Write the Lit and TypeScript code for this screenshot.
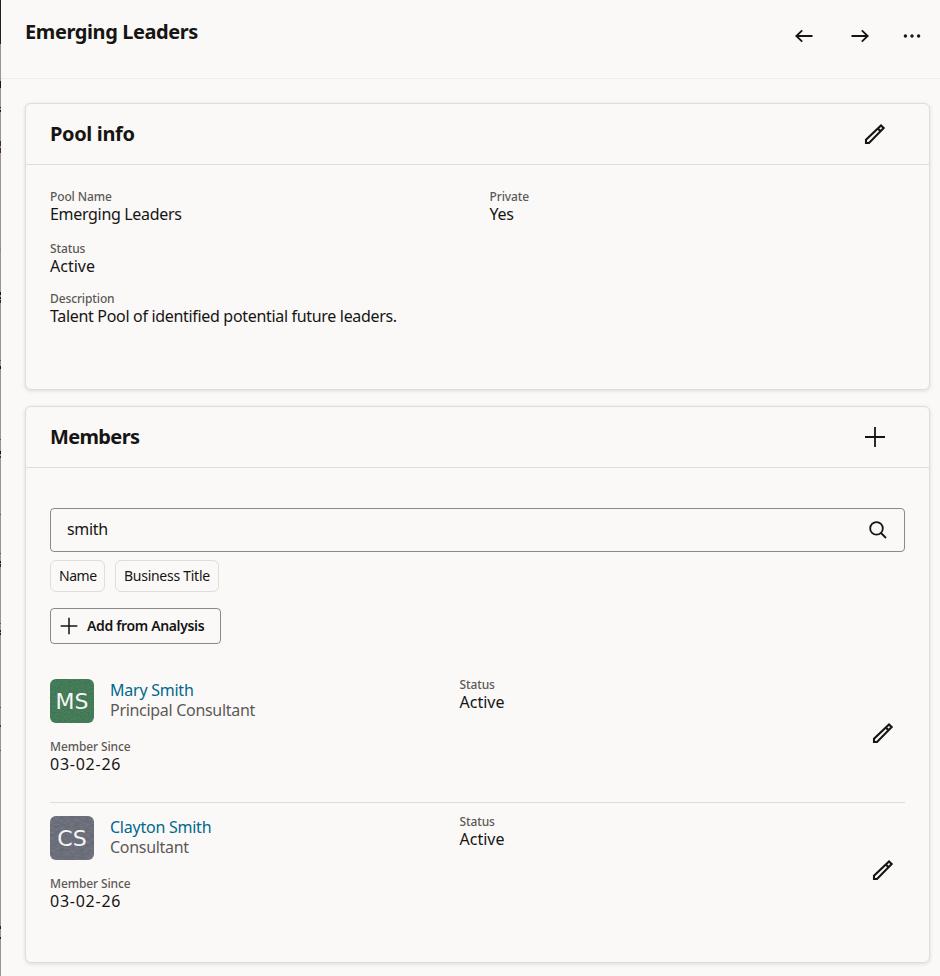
import { LitElement, html, css, svg } from "lit";
import { customElement, property } from "lit/decorators.js";

const icons: Record<string, unknown> = {
  back: svg`<path d="M20.5 12H4.3M10.2 6.3L4.3 12l5.9 5.7"/>`,
  forward: svg`<path d="M3.5 12h16.2M13.8 6.3l5.9 5.7-5.9 5.7"/>`,
  more: svg`<g fill="currentColor" stroke="none"><circle cx="5.4" cy="12" r="1.7"/><circle cx="12" cy="12" r="1.7"/><circle cx="18.6" cy="12" r="1.7"/></g>`,
  edit: svg`<path stroke-width="2.1" d="M3 21v-3.3L18 3.4l2.7 2.7L6 21z M14.8 6.4l2.9 2.9"/>`,
  plus: svg`<path d="M2 12h20M12 2v20"/>`,
  search: svg`<circle cx="10.5" cy="10.4" r="6.3"/><path d="M15 15l5 5"/>`,
};

@customElement("ui-icon")
class UiIcon extends LitElement {
  static styles = css`
    :host { display: block; width: 24px; height: 24px; flex: none; color: #161513; }
    svg { display: block; width: 100%; height: 100%; fill: none; stroke: currentColor; stroke-width: 1.8; }
  `;
  @property() name = "";
  render() {
    return html`<svg viewBox="0 0 24 24" aria-hidden="true">${icons[this.name]}</svg>`;
  }
}

@customElement("labelled-value")
class LabelledValue extends LitElement {
  static styles = css`
    :host { display: block; }
    .label { padding-top: 1px; font-size: 12px; line-height: 14px; color: #5b5957; font-weight: 500; letter-spacing: -0.12px; }
    .value { padding-bottom: 1px; font-size: 16px; line-height: 20px; color: #161513; letter-spacing: -0.32px; }
    .value.short { letter-spacing: 0; }
    .value.digits { letter-spacing: 0.75px; }
  `;
  @property() label = "";
  @property() value = "";
  render() {
    const kind = /^\d/.test(this.value) ? "digits" : this.value === "Active" ? "short" : "";
    return html`<div class="label">${this.label}</div>
      <div class="value ${kind}">${this.value}</div>`;
  }
}

const members = [
  { initials: "MS", tone: "green", name: "Mary Smith", title: "Principal Consultant" },
  { initials: "CS", tone: "slate", name: "Clayton Smith", title: "Consultant" },
];

@customElement("app-root")
class AppRoot extends LitElement {
  static styles = css`
    :host {
      display: block; position: relative; height: 976px; overflow: hidden;
      box-sizing: border-box; background: #fbf9f8; color: #161513;
      font-family: "Noto Sans", "Open Sans", sans-serif; font-size: 16px;
    }
    * { box-sizing: border-box; }
    .edge { position: absolute; left: 0; top: 0; width: 1px; height: 976px; display: block; }
    header {
      display: flex; height: 79px; margin-left: 1px; padding: 20px 16px 0 24px;
      border-bottom: 1px solid #efedec;
    }
    h1, h2 { margin: 0; font-size: 20px; line-height: 24px; font-weight: 700; letter-spacing: -0.35px; }
    h1 { flex: 1; letter-spacing: -0.41px; }
    .members h2 { letter-spacing: -0.65px; }
    .nav { display: flex; gap: 32px; padding-top: 4px; }
    .nav ui-icon:last-child { margin-left: -4px; }
    main { display: flex; flex-direction: column; gap: 16px; padding: 24px 10px 0 25px; }
    .card {
      border: 1px solid #dfdddc; border-radius: 6px; background: #fbf9f8;
      box-shadow: 0 1px 4px rgba(0, 0, 0, 0.12);
    }
    .info { height: 287px; }
    .members { height: 557px; }
    .head {
      display: flex; align-items: center; justify-content: space-between;
      height: 61px; padding: 0 42px 0 24px; border-bottom: 1px solid #dfdddc;
    }
    .fields { display: grid; grid-template-columns: 439.5px 1fr; padding: 24px 24px 0; row-gap: 16px; }
    .wide { grid-column: 1 / -1; }
    .description { margin-top: -2px; }
    .body { padding: 40px 24px 0; }
    .search {
      display: flex; align-items: center; justify-content: space-between; height: 44px;
      padding: 0 14px 0 16px; border: 1px solid #8b8988; border-radius: 4px; letter-spacing: -0.3px;
    }
    .search span { padding-bottom: 2px; }
    .chips { display: flex; gap: 10px; margin-top: 8px; }
    .chip {
      height: 32px; line-height: 30px; padding: 0 8px; border: 1px solid #dfdddc; border-radius: 6px;
      font-size: 14px; letter-spacing: -0.3px; white-space: nowrap;
    }
    .chip.name { width: 55px; letter-spacing: -0.45px; }
    .chip.title { width: 104px; letter-spacing: -0.27px; }
    .add {
      display: flex; align-items: center; width: 171px; height: 36px; margin-top: 16px; padding: 0 0 0 8px; gap: 8px;
      border: 1px solid #8b8988; border-radius: 4px; background: none; color: inherit;
      font: 600 14px/20px "Noto Sans", sans-serif; letter-spacing: -0.35px; white-space: nowrap;
    }
    .add ui-icon { width: 20px; height: 20px; }
    .member { display: grid; grid-template-columns: 409.5px 1fr 44px; height: 136px; }
    .list { margin-top: 22px; }
    .member + .member { border-top: 1px solid #dfdddc; height: 150px; }
    .person { display: flex; gap: 16px; height: 44px; margin-top: 13px; }
    .avatar {
      display: flex; justify-content: center; width: 44px; height: 44px; border-radius: 6px;
      color: #f4f6f5; font-family: "DejaVu Sans", sans-serif; font-size: 22px; line-height: 46px;
      position: relative; overflow: hidden;
    }
    .green { background: #34724a; }
    .slate { background: #616572; }
    .grain { position: absolute; inset: 0; width: 44px; height: 44px; opacity: 0.25; }
    .initials { position: relative; }
    .names { padding-top: 1px; line-height: 20px; letter-spacing: -0.3px; }
    .link { color: #00688c; letter-spacing: -0.24px; }
    .role { color: #5b5957; }
    .since { margin-top: 16px; }
    .status { margin-top: 11px; }
    .action { margin-top: 55px; margin-left: 10px; }
  `;
  render() {
    const ticks = [[81, 7, "#111827"], [107, 1, "#222"], [110, 2, "#222"], [141, 5, "#4a2a20"], [148, 5, "#4a2a20"], [249, 1, "#777"],
      [292, 3, "#111"], [297, 2, "#222"], [300, 3, "#202a38"], [360, 1, "#555"], [366, 3, "#111827"], [439, 1, "#555"], [451, 3, "#111"],
      [456, 2, "#333"], [514, 1, "#555"], [553, 1, "#555"], [561, 2, "#111"], [564, 3, "#222a3a"], [623, 1, "#555"], [630, 2, "#222"],
      [633, 2, "#222"], [707, 1, "#555"], [725, 2, "#344054"], [750, 1, "#555"], [926, 3, "#292220"], [937, 2, "#292220"]] as const;
    return html`
      <svg class="edge" viewBox="0 0 1 976" aria-hidden="true">
        <rect width="1" height="976" fill="#979695"></rect><rect width="1" height="44" fill="#231f1f"></rect>
        ${ticks.map(([y, h, c]) => svg`<rect y=${y} width="1" height=${h} fill=${c}></rect>`)}
      </svg>
      <header>
        <h1>Emerging Leaders</h1>
        <div class="nav">
          <ui-icon name="back"></ui-icon><ui-icon name="forward"></ui-icon><ui-icon name="more"></ui-icon>
        </div>
      </header>
      <main>
        <section class="card info">
          <div class="head"><h2>Pool info</h2><ui-icon name="edit"></ui-icon></div>
          <div class="fields">
            <labelled-value label="Pool Name" value="Emerging Leaders"></labelled-value>
            <labelled-value label="Private" value="Yes"></labelled-value>
            <labelled-value class="wide" label="Status" value="Active"></labelled-value>
            <labelled-value class="wide description" label="Description" value="Talent Pool of identified potential future leaders."></labelled-value>
          </div>
        </section>
        <section class="card members">
          <div class="head"><h2>Members</h2><ui-icon name="plus"></ui-icon></div>
          <div class="body">
            <div class="search"><span>smith</span><ui-icon name="search"></ui-icon></div>
            <div class="chips"><span class="chip name">Name</span><span class="chip title">Business Title</span></div>
            <button class="add"><ui-icon name="plus"></ui-icon><span>Add from Analysis</span></button>
            <div class="list">
              ${members.map((m, i) => html`
                <article class="member">
                  <div>
                    <div class="person">
                      <div class="avatar ${m.tone}">
                        <svg class="grain" aria-hidden="true">
                          <filter id="g${i}"><feTurbulence type="fractalNoise" baseFrequency=${i ? "0.2 0.6" : "0.6"} numOctaves="2"/><feColorMatrix type="saturate" values="0"/></filter>
                          <rect width="44" height="44" filter="url(#g${i})"></rect>
                        </svg>
                        <span class="initials">${m.initials}</span>
                      </div>
                      <div class="names"><div class="link">${m.name}</div><div class="role">${m.title}</div></div>
                    </div>
                    <labelled-value class="since" label="Member Since" value="03-02-26"></labelled-value>
                  </div>
                  <labelled-value class="status" label="Status" value="Active"></labelled-value>
                  <ui-icon class="action" name="edit"></ui-icon>
                </article>`)}
            </div>
          </div>
        </section>
      </main>`;
  }
}
